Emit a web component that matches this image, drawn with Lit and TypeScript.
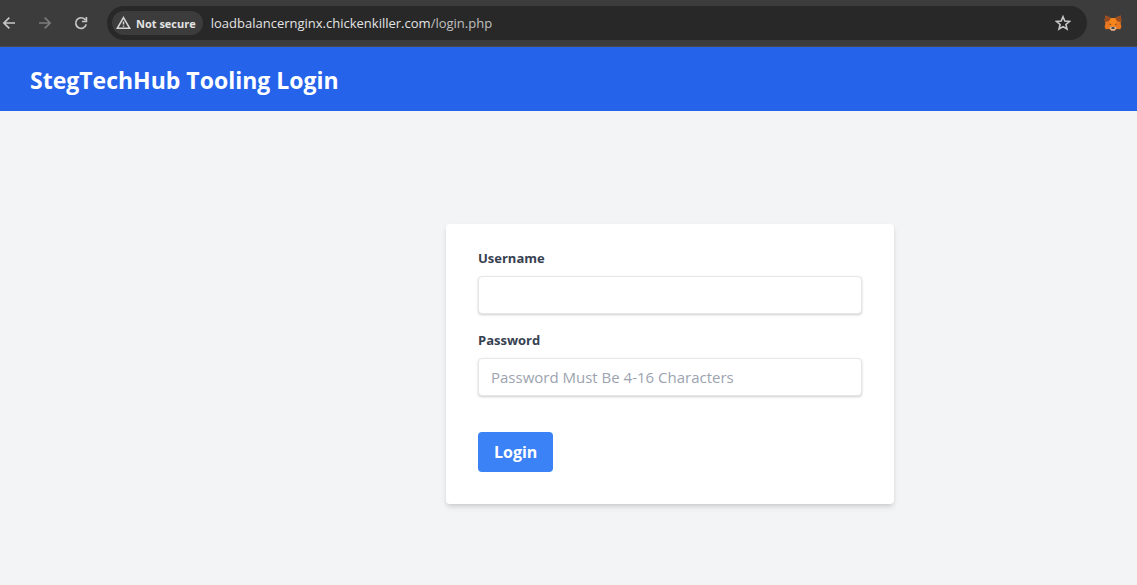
import { LitElement, html, css } from "lit";
import { customElement } from "lit/decorators.js";

@customElement("browser-bar")
class BrowserBar extends LitElement {
  static styles = css`
    :host {
      display: flex;
      align-items: center;
      box-sizing: border-box;
      height: 47px;
      padding-right: 15px;
      background: #3c3c3c;
      border-bottom: 1px solid #4a4a4a;
    }
    button {
      display: block;
      margin: 0;
      padding: 0;
      border: 0;
      background: none;
      color: #c7c7c7;
      font: inherit;
    }
    svg {
      display: block;
    }
    .nav {
      display: flex;
      gap: 20px;
      padding-right: 18px;
    }
    .nav button[disabled] {
      color: #7c7c7c;
    }
    .address {
      display: flex;
      align-items: center;
      flex: 1;
      height: 34px;
      box-sizing: border-box;
      padding: 0 16px 0 5px;
      border-radius: 17px;
      background: #282828;
    }
    .chip {
      display: flex;
      align-items: center;
      gap: 5px;
      height: 24px;
      padding: 0 7px 0 4px;
      border-radius: 12px;
      background: #3c3c3c;
      color: #e3e3e3;
      font-size: 11px;
      font-weight: 700;
      white-space: nowrap;
    }
    .url {
      flex: 1;
      padding-left: 8px;
      color: #e3e3e3;
      font-size: 13px;
      line-height: 20px;
      white-space: nowrap;
    }
    .path {
      color: #c0c0c0;
    }
    .extension {
      margin-left: 17px;
    }
  `;

  render() {
    return html`
      <nav class="nav" aria-label="Browser">
        <button aria-label="Back">
          <svg width="17" height="16" viewBox="0 0 17 16" fill="none" stroke="currentColor" stroke-width="1.7">
            <path d="M15 8H4M9.3 2.6L3.9 8l5.4 5.4" />
          </svg>
        </button>
        <button aria-label="Forward" disabled>
          <svg width="16" height="16" viewBox="0 0 16 16" fill="none" stroke="currentColor" stroke-width="1.7">
            <path d="M2 8h11M7.7 2.6L13.1 8l-5.4 5.4" />
          </svg>
        </button>
        <button aria-label="Reload">
          <svg width="16" height="16" viewBox="0 0 16 16" fill="none" stroke="currentColor" stroke-width="1.7">
            <path d="M13.2 9.4A5.3 5.3 0 1 1 12.4 5M13.4 2v4.5H9" />
          </svg>
        </button>
      </nav>
      <div class="address">
        <button class="chip">
          <svg width="15" height="14" viewBox="0 0 15 14" fill="none" stroke="#d5d5d5" stroke-width="1.5">
            <path d="M7.5 1.6L13.7 12.3H1.3z" />
            <path d="M7.5 5.4v3.2M7.5 9.4v1.4" />
          </svg>
          Not secure
        </button>
        <span class="url">loadbalancernginx.chickenkiller.com<span class="path">/login.php</span></span>
        <button aria-label="Bookmark this page">
          <svg width="16" height="16" viewBox="0 0 16 16" fill="none" stroke="currentColor" stroke-width="1.6">
            <path d="M8 1.7l1.8 4.3 4.7.4-3.6 3.1 1.1 4.5L8 11.6 4 14l1.1-4.5L1.5 6.4l4.7-.4z" />
          </svg>
        </button>
      </div>
      <button class="extension" aria-label="MetaMask">
        <svg width="18" height="16" viewBox="0 0 18 16">
          <path fill="#e8771f" d="M1.6.4L6.9 3h4.2L16.4.4l1 4.6-.8 3.4.8 3-1 2.8-3.6-.2-2.2 1.7H7.4l-2.2-1.7-3.6.2-1-2.8.8-3L.6 5z" />
          <path fill="#984c20" d="M1.6.4L6.9 3.2 4.6 6.2l-3.2.8L.6 5zM16.4.4l-5.3 2.8 2.3 3 3.2.8.8-2z" />
          <path fill="#f6851b" d="M6.9 3h4.2l1.5 4.8-1.6 3.6H7L5.4 7.8z" />
          <path fill="#7a4524" d="M5.2 8.4l2 .9-.2.7-1.6-.5zM12.8 8.4l-2 .9.2.7 1.6-.5z" />
          <path fill="#d0bdb0" d="M5.4 12.5l2-.7h3.2l2 .7-2 3H7.4z" />
          <path fill="#242020" d="M7.6 12.2h2.8l.2 1.5H7.4z" />
        </svg>
      </button>
    `;
  }
}

@customElement("login-form")
class LoginForm extends LitElement {
  static styles = css`
    :host {
      display: block;
    }
    .card {
      padding: 24px 32px 32px;
      border-radius: 4px;
      background: #fff;
      box-shadow: 0 4px 6px -1px rgba(0, 0, 0, 0.1), 0 2px 4px -1px rgba(0, 0, 0, 0.1);
    }
    .field {
      margin-bottom: 16px;
    }
    .field.last {
      margin-bottom: 36px;
    }
    label {
      display: block;
      margin-bottom: 8px;
      color: #374151;
      font-size: 13px;
      line-height: 20px;
      font-weight: 700;
    }
    input {
      display: block;
      box-sizing: border-box;
      width: 100%;
      height: 38px;
      margin: 0;
      padding: 0 12px;
      border: 1px solid #e5e7eb;
      border-radius: 4px;
      outline: 0;
      background: #fff;
      box-shadow: 0 1px 3px rgba(0, 0, 0, 0.1), 0 1px 2px rgba(0, 0, 0, 0.1);
      color: #374151;
      font-family: inherit;
      font-size: 15px;
    }
    input::placeholder {
      color: #9ca3af;
      opacity: 1;
    }
    button {
      display: block;
      margin: 0;
      padding: 8px 16px;
      border: 0;
      border-radius: 4px;
      background: #3b82f6;
      color: #fff;
      font-family: inherit;
      font-size: 16px;
      line-height: 24px;
      font-weight: 700;
    }
  `;

  render() {
    return html`
      <form class="card" @submit=${(e: Event) => e.preventDefault()}>
        <div class="field">
          <label for="username">Username</label>
          <input id="username" type="text" autocomplete="username" />
        </div>
        <div class="field last">
          <label for="password">Password</label>
          <input id="password" type="password" placeholder="Password Must Be 4-16 Characters" />
        </div>
        <button type="submit">Login</button>
      </form>
    `;
  }
}

@customElement("app-root")
class AppRoot extends LitElement {
  static styles = css`
    :host {
      display: flex;
      flex-direction: column;
      min-height: 100vh;
      background: #f3f4f6;
      font-family: "Segoe UI", "Open Sans", "Noto Sans", sans-serif;
    }
    header {
      padding: 17px 30px 15px;
      background: #2563eb;
      color: #fff;
    }
    h1 {
      margin: 0;
      font-size: 23px;
      line-height: 32px;
      font-weight: 700;
    }
    main {
      display: grid;
      grid-template-columns: 446fr minmax(0, 448px) 243fr;
      padding: 113px 0 80px;
    }
    login-form {
      grid-column: 2;
    }
  `;

  render() {
    return html`
      <browser-bar></browser-bar>
      <header><h1>StegTechHub Tooling Login</h1></header>
      <main><login-form></login-form></main>
    `;
  }
}
